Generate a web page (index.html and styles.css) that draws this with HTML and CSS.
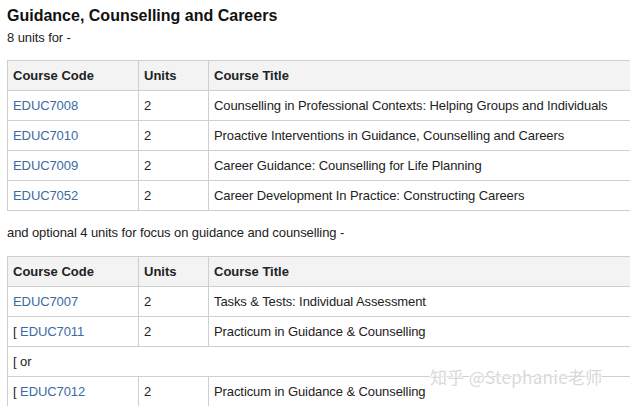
FILE: index.html
```html
<!DOCTYPE html>
<html>
<head>
<meta charset="utf-8">
<link rel="stylesheet" href="styles.css">
</head>
<body>
<div class="page">
  <h1 class="title">Guidance, Counselling and Careers</h1>
  <p class="note">8 units for -</p>
  <table class="courses">
    <thead>
      <tr><th class="c-code">Course Code</th><th class="c-units">Units</th><th class="c-title">Course Title</th></tr>
    </thead>
    <tbody>
      <tr><td><a href="#">EDUC7008</a></td><td>2</td><td>Counselling in Professional Contexts: Helping Groups and Individuals</td></tr>
      <tr><td><a href="#">EDUC7010</a></td><td>2</td><td>Proactive Interventions in Guidance, Counselling and Careers</td></tr>
      <tr><td><a href="#">EDUC7009</a></td><td>2</td><td>Career Guidance: Counselling for Life Planning</td></tr>
      <tr><td><a href="#">EDUC7052</a></td><td>2</td><td>Career Development In Practice: Constructing Careers</td></tr>
    </tbody>
  </table>
  <p class="note gap">and optional 4 units for focus on guidance and counselling -</p>
  <table class="courses second">
    <thead>
      <tr><th class="c-code">Course Code</th><th class="c-units">Units</th><th class="c-title">Course Title</th></tr>
    </thead>
    <tbody>
      <tr><td><a href="#">EDUC7007</a></td><td>2</td><td>Tasks &amp; Tests: Individual Assessment</td></tr>
      <tr><td>[ <a href="#">EDUC7011</a></td><td>2</td><td>Practicum in Guidance &amp; Counselling</td></tr>
      <tr><td colspan="3">[ or</td></tr>
      <tr><td>[ <a href="#">EDUC7012</a></td><td>2</td><td>Practicum in Guidance &amp; Counselling</td></tr>
    </tbody>
  </table>
</div>
<div class="watermark">知乎 @Stephanie老师</div>
</body>
</html>
```

FILE: styles.css
```css
html, body {
  margin: 0;
  padding: 0;
  overflow: hidden;
  background: #fff;
}
body {
  font-family: "Liberation Sans", Arial, sans-serif;
  color: #222;
  font-size: 13px;
  width: 630px;
  height: 406px;
  position: relative;
}
.page {
  padding: 6px 0 0 7px;
}
.title {
  margin: 0;
  font-size: 16px;
  line-height: 20px;
  font-weight: bold;
  color: #111;
}
.note {
  margin: 2px 0 0;
  font-size: 13px;
  line-height: 20px;
  letter-spacing: -0.09px;
}
.note.gap {
  margin-top: 12px;
}
.courses {
  border-collapse: collapse;
  margin-top: 12px;
  width: 660px;
}
.courses.second {
  margin-top: 13px;
}
.courses th,
.courses td {
  border: 1px solid #cfcfcf;
  padding: 5px 6px 5px 5px;
  line-height: 19px;
  text-align: left;
  white-space: nowrap;
}
.courses td {
  letter-spacing: -0.09px;
}
.courses th {
  background: #f3f3f3;
  font-weight: bold;
  color: #222;
}
.c-code { width: 119px; }
.c-units { width: 58px; }
.courses a {
  color: #3a6ba4;
  text-decoration: none;
}
.watermark {
  position: absolute;
  left: 430px;
  top: 366px;
  font-family: "Noto Sans CJK SC", "Liberation Sans", sans-serif;
  font-size: 17px;
  line-height: 22px;
  color: #d9d9d9;
  text-shadow: 0 0 1px #fff, 1px 1px 0 #fff, -1px -1px 0 #fff;
  letter-spacing: 0.3px;
}
```
